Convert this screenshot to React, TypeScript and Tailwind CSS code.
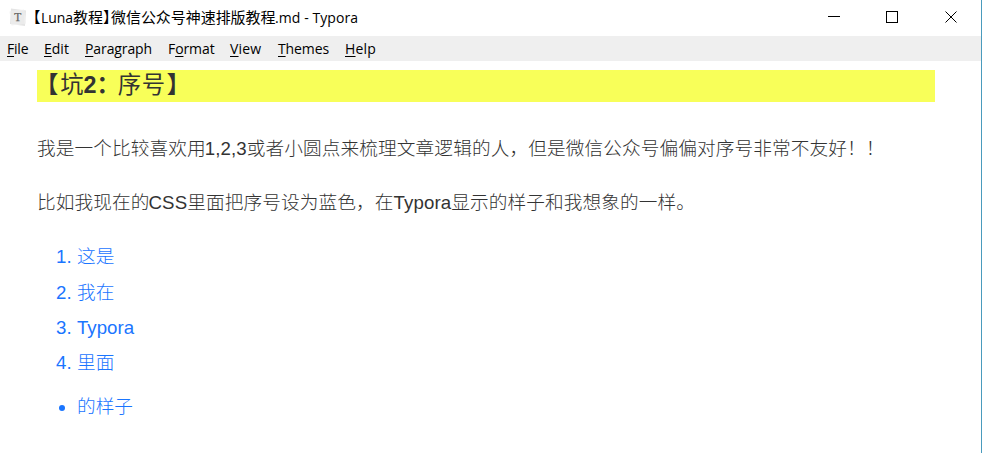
import React from "react";

const UI = "font-['Open_Sans','Noto_Sans_CJK_SC',sans-serif]";
const BODY = "font-['Liberation_Sans','Noto_Sans_CJK_SC',sans-serif]";

const menu = [
  { pre: "", key: "F", post: "ile", cls: "w-[22px] mr-[15px] tracking-[-0.2px]" },
  { pre: "", key: "E", post: "dit", cls: "w-[25px] mr-4" },
  { pre: "", key: "P", post: "aragraph", cls: "w-[67px] mr-4 tracking-[-0.1px]" },
  { pre: "F", key: "o", post: "rmat", cls: "w-[46px] mr-4 tracking-[-0.1px]" },
  { pre: "", key: "V", post: "iew", cls: "w-8 mr-4 tracking-[0.2px]" },
  { pre: "", key: "T", post: "hemes", cls: "w-[51px] mr-4 tracking-[-0.12px]" },
  { pre: "", key: "H", post: "elp", cls: "w-[31px] tracking-[0.2px]" },
];

function AppIcon() {
  return (
    <svg className="mt-[8px] ml-[9px] h-[19px] w-[18px] shrink-0" viewBox="0 0 18 19">
      <path d="M2 .5 17 2.500 16 18 1 16Z" fill="#e4e4e4" />
      <path d="M.5 3.500 15 1.500l2 14-14.500 2Z" fill="#f2f2f2" />
      <path d="M2 2.500h13.500v13.500h-13.500Z" fill="#ebebeb" />
      <text x="8.700" y="13" textAnchor="middle" fontFamily="Liberation Serif, serif" fontSize="11.500" fill="#666" stroke="#666" strokeWidth=".25">T</text>
    </svg>
  );
}

function TitleBar() {
  return (
    <header className={`flex h-9 bg-white text-black ${UI}`}>
      <AppIcon />
      <h1 className="ml-[6px] flex h-[34px] items-center text-[15px] whitespace-pre">
        <span className="w-[8px] [font-feature-settings:'halt']">【</span>
        <span className="w-8 text-[14px] tracking-[-0.1px]">Luna</span>
        <span className="w-[30px]">教程</span>
        <span className="w-[8px] [font-feature-settings:'halt']">】</span>
        <span className="w-[164px] tracking-[-0.05px]">微信公众号神速排版教程</span>
        <span className="text-[14px] tracking-[0.08px]">.md - Typora</span>
      </h1>
      <div className="ml-auto flex h-9 pr-4">
        <svg className="h-9 w-[138px]" viewBox="0 0 138 36" fill="none" stroke="#000" shapeRendering="crispEdges">
          <path d="M1 16.500h12M59.500 11.500h11v11h-11Z" />
          <path d="m118.500 11.500 11 11m0-11-11 11" shapeRendering="auto" />
        </svg>
      </div>
    </header>
  );
}

export default function App() {
  return (
    <div className="h-[453px] w-[982px] overflow-hidden border-r border-[#4a9bbd] bg-white">
      <TitleBar />
      <nav className={`flex h-[25px] bg-[#efefef] pl-[7px] text-[14px] leading-[26px] whitespace-nowrap text-black ${UI}`}>
        {menu.map((m) => (
          <span key={m.key + m.post} className={m.cls}>
            {m.pre}
            <span className="underline decoration-1 underline-offset-2 [text-decoration-skip-ink:none]">{m.key}</span>
            {m.post}
          </span>
        ))}
      </nav>
      <main className={`pt-[9px] pl-[37px] text-[18.67px] font-light text-[#333] ${BODY}`}>
        <h2 className="h-8 w-[898px] bg-[#f8ff59] text-[23.3px] leading-[31px] font-bold">
          <span className="-ml-[2px]">【</span>
          <span className="ml-[2px] font-normal">坑</span>2<span className="-mr-[2px]">：</span>
          <span className="font-normal tracking-[0.7px]">序号</span>
          <span className="ml-px">】</span>
        </h2>
        <p className="mt-[29px] h-[35px] leading-[35px] tracking-[0.1px] whitespace-nowrap">
          我是一个比较喜欢用<span className="-ml-px tracking-[0.1px]">1,2,3</span>或者小圆点来梳理文章逻辑的人，但是微信公众号偏偏对序号非常不友好！！
        </p>
        <p className="mt-[19px] h-[35px] leading-[35px] tracking-[0.1px] whitespace-nowrap">
          比如我现在的<span className="-ml-px">CSS</span>里面把序号设为蓝色，在Typora显示的样子和我想象的一样。
        </p>
        <ol className="mt-[19px] text-[#1a75ff]">
          {["这是", "我在", "Typora", "里面"].map((t, i) => (
            <li key={t} className="flex h-[35.400px] leading-[35px] nth-2:pt-px">
              <span className="w-10 pl-[19px]">{i + 1}.</span>
              {t}
            </li>
          ))}
        </ol>
        <ul className="mt-[8px] text-[#1a75ff]">
          <li className="flex h-[35px] items-center leading-[35px]">
            <span className="mt-[3px] mr-[12px] ml-[22px] size-[6px] rounded-full bg-[#1a75ff]" />
            的样子
          </li>
        </ul>
      </main>
    </div>
  );
}
